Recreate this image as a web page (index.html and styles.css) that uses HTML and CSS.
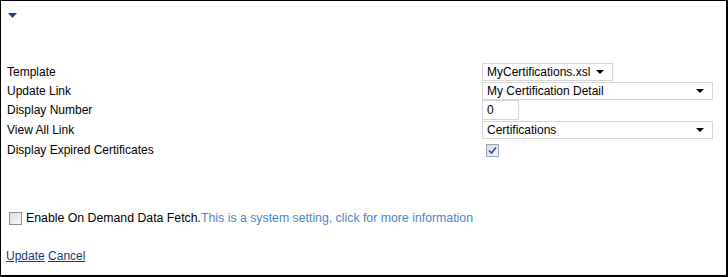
FILE: index.html
```html
<!DOCTYPE html>
<html lang="en">

<head>
  <meta charset="UTF-8" />
  <title>My Certifications Settings</title>
  <link rel="stylesheet" href="styles.css">
</head>

<body>
  <div class="panel">
    <div class="toggle">
      <svg width="9" height="6" viewBox="0 0 9 6"><path d="M0 0H9L4.5 5Z" fill="#1f3f9c" /></svg>
    </div>

    <div class="settings">
      <label class="label" for="template">Template</label>
      <div class="cell">
        <div class="select select-short" id="template">
          <span>MyCertifications.xsl</span><i class="arrow"></i>
        </div>
      </div>

      <label class="label" for="updateLink">Update Link</label>
      <div class="cell">
        <div class="select select-wide" id="updateLink">
          <span>My Certification Detail</span><i class="arrow"></i>
        </div>
      </div>

      <label class="label" for="displayNumber">Display Number</label>
      <div class="cell cell-tall">
        <div class="number" id="displayNumber">0</div>
      </div>

      <label class="label" for="viewAllLink">View All Link</label>
      <div class="cell cell-tall">
        <div class="select select-wide" id="viewAllLink">
          <span>Certifications</span><i class="arrow"></i>
        </div>
      </div>

      <label class="label" for="displayExpired">Display Expired Certificates</label>
      <div class="cell cell-tall">
        <div class="check checked" id="displayExpired">
          <svg width="9" height="9" viewBox="0 0 9 9"><path d="M1 4.5L3.5 7L8 1.5" fill="none" stroke="#2a49a8" stroke-width="1.6" /></svg>
        </div>
      </div>
    </div>

    <div class="fetch">
      <div class="check"></div>
      <span class="fetch-text">Enable On Demand Data Fetch.</span><a class="fetch-info" href="#">This is a system setting, click for more information</a>
    </div>

    <div class="actions">
      <a href="#">Update</a> <a href="#">Cancel</a>
    </div>
  </div>
</body>

</html>
```

FILE: styles.css
```css
body {
  margin: 0;
  font-family: "Liberation Sans", Arial, sans-serif;
  font-size: 12px;
  color: #000;
  background-color: #fff;
}

.panel {
  width: 725px;
  height: 274px;
  border-left: 1px solid #000;
  border-top: 1px solid #000;
  border-right: 2px solid #000;
  border-bottom: 2px solid #000;
}

.toggle {
  padding: 12px 0 0 7px;
  height: 49px;
  line-height: 0;
}

.settings {
  display: grid;
  grid-template-columns: 481px 1fr;
  align-items: center;
}

.label {
  padding-left: 6px;
  line-height: 14px;
}

.cell {
  display: flex;
  align-items: center;
  height: 19px;
}

.cell-tall {
  height: 20px;
}

.select {
  box-sizing: border-box;
  height: 18px;
  border: 1px solid #d6d6d6;
  display: flex;
  align-items: center;
  justify-content: space-between;
  padding: 0 8px 0 4px;
  font-size: 12px;
}

.select-short {
  width: 131px;
}

.select-wide {
  width: 231px;
}

.arrow {
  width: 0;
  height: 0;
  border-left: 4px solid transparent;
  border-right: 4px solid transparent;
  border-top: 4px solid #000;
}

.number {
  box-sizing: border-box;
  width: 37px;
  height: 20px;
  border: 1px solid #d6d6d6;
  padding: 2px 4px;
}

.check {
  box-sizing: border-box;
  width: 13px;
  height: 13px;
  border: 1px solid #8e8f8f;
  background: linear-gradient(135deg, #dcdcdc, #f8f8f8);
  display: flex;
  align-items: center;
  justify-content: center;
}

.check.checked {
  margin-left: 4px;
  border-color: #9aa4b8;
}

.fetch {
  display: flex;
  align-items: center;
  margin: 51px 0 0 8px;
  font-size: 12.3px;
}

.fetch .check {
  margin-right: 4px;
}

.fetch-info {
  color: #4b86c6;
  text-decoration: none;
}

.actions {
  margin: 24px 0 0 5px;
}

.actions a {
  color: #1b3a78;
}
```
